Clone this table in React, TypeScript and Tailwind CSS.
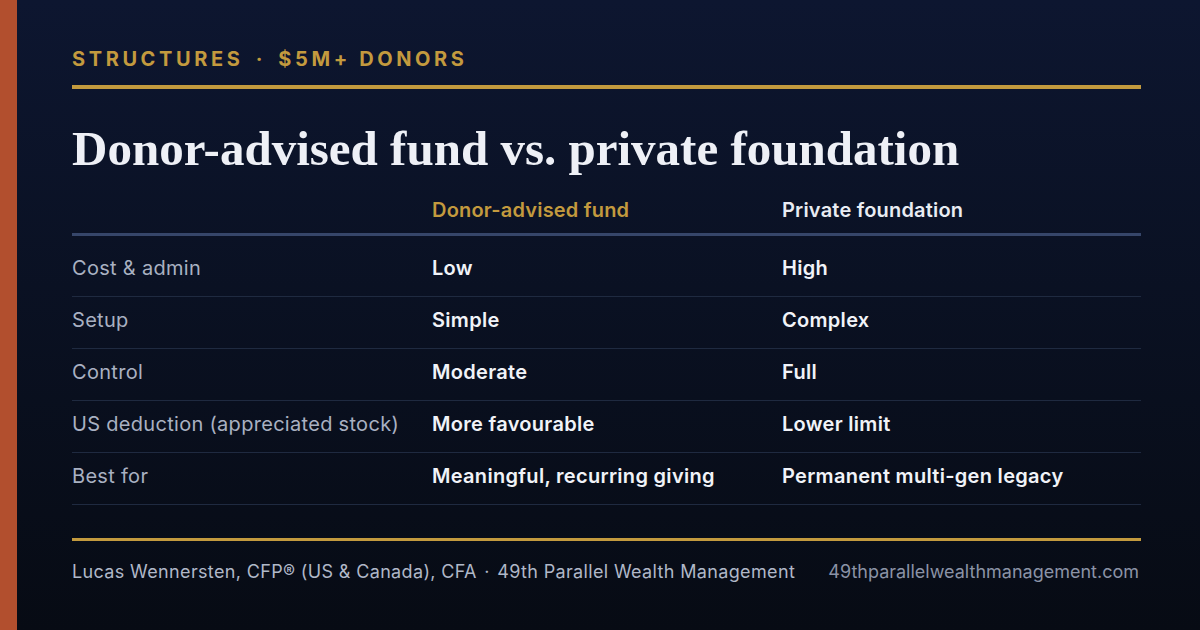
import React from "react";

const rows = [
  { label: "Cost & admin", daf: "Low", pf: "High" },
  { label: "Setup", daf: "Simple", pf: "Complex" },
  { label: "Control", daf: "Moderate", pf: "Full" },
  { label: "US deduction (appreciated stock)", daf: "More favourable", pf: "Lower limit" },
  { label: "Best for", daf: "Meaningful, recurring giving", pf: "Permanent multi-gen legacy" },
];

const App = () => {
  return (
    <div className="w-[1200px] h-[630px] flex bg-gradient-to-b from-[#0d1630] to-[#070b14] font-['Inter','Liberation_Sans',sans-serif] overflow-hidden">
      <div className="w-[17px] h-full bg-[#b24f2e] shrink-0"></div>
      <div className="flex-1 pl-[55px] pr-[59px] pt-[46px] flex flex-col">
        <div className="text-[#c39a3e] text-[20px] font-bold tracking-[0.18em] leading-[26px]">
          STRUCTURES <span className="mx-[4px]">·</span> $5M+ DONORS
        </div>
        <div className="h-[4px] bg-[#c39a3e] mt-[13px]"></div>
        <h1 className="mt-[32px] text-[#eef0f6] text-[49px] font-bold leading-[56px] font-['Liberation_Serif','DejaVu_Serif',serif]">
          Donor-advised fund vs. private foundation
        </h1>
        <div className="mt-[14px]">
          <div className="grid grid-cols-[360px_350px_1fr] h-[45px] pb-[4px] items-center border-b-[3px] border-[#36466a] text-[20px] tracking-[0.2px] font-semibold">
            <div></div>
            <div className="text-[#c39a3e]">Donor-advised fund</div>
            <div className="text-[#e9ecf3]">Private foundation</div>
          </div>
          <div className="pt-[9px]">
            {rows.map((r) => (
              <div
                key={r.label}
                className="grid grid-cols-[360px_350px_1fr] h-[52px] pb-[5px] items-center border-b border-[#1f2a40] text-[20px] tracking-[0.3px]"
              >
                <div className="text-[#a9b1c2]">{r.label}</div>
                <div className="text-[#f1f3f8] font-semibold">{r.daf}</div>
                <div className="text-[#f1f3f8] font-semibold">{r.pf}</div>
              </div>
            ))}
          </div>
        </div>
        <div className="h-[3px] bg-[#c39a3e] mt-[33px]"></div>
        <div className="flex justify-between items-center mt-[17px] pr-[2px] text-[18px]">
          <div className="text-[#b0b8c8] tracking-[0.35px]">
            Lucas Wennersten, CFP® (US &amp; Canada), CFA <span className="mx-[2px]">·</span> 49th Parallel Wealth Management
          </div>
          <div className="text-[#8b93a6]">49thparallelwealthmanagement.com</div>
        </div>
      </div>
    </div>
  );
};

export default App;
